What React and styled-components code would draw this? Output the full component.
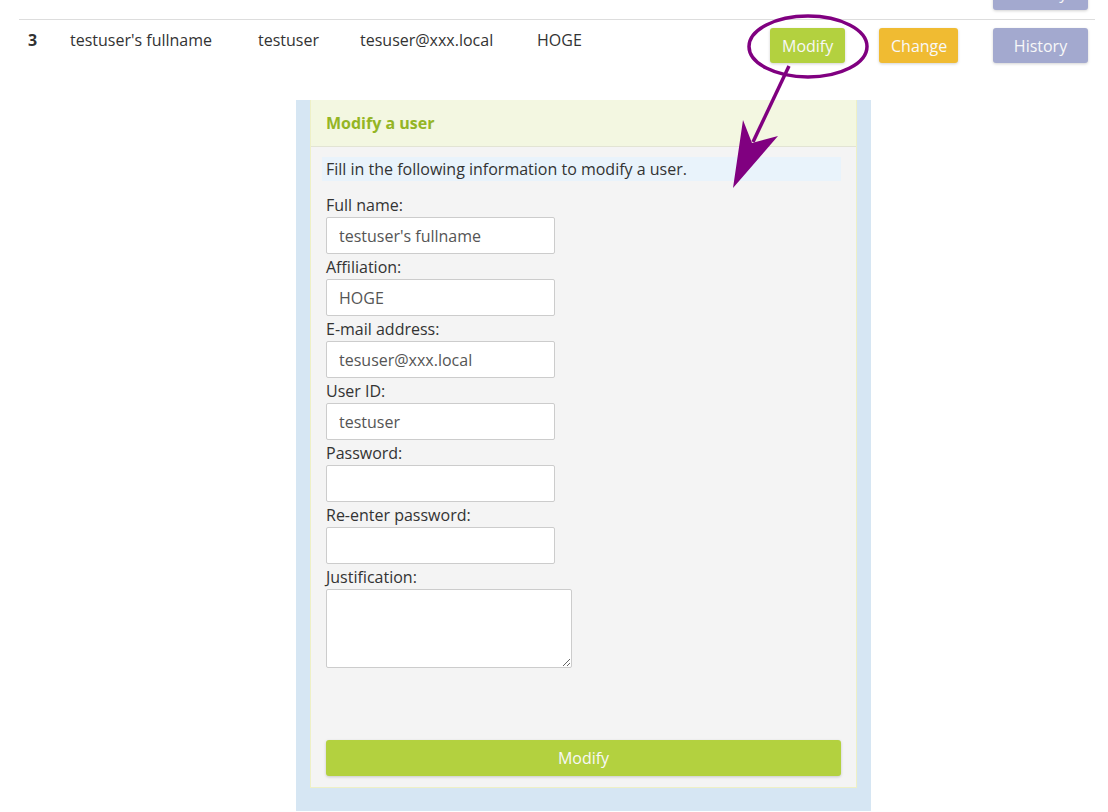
import React from "react";
import styled, { createGlobalStyle } from "styled-components";

const GlobalStyle = createGlobalStyle`
  html, body {
    margin: 0;
    padding: 0;
    background: #fff;
  }
  body {
    font-family: "Open Sans", "Liberation Sans", sans-serif;
    font-size: 16px;
    color: #333;
  }
`;

const Page = styled.div`
  position: relative;
  width: 1108px;
  height: 812px;
  overflow: hidden;
`;

const Table = styled.div`
  margin-left: 19px;
  width: 1076px;
`;

const PrevRow = styled.div`
  height: 20px;
  display: flex;
  justify-content: flex-end;
  align-items: flex-end;
  padding-right: 7px;
  padding-bottom: 9px;
  box-sizing: border-box;
  overflow: hidden;
  border-bottom: 1px solid #dddddd;
`;

const Row = styled.div`
  display: flex;
  align-items: flex-start;
  padding-top: 8px;
  height: 80px;
  box-sizing: border-box;
`;

const Cell = styled.div`
  width: ${({ w }) => w}px;
  padding-left: 9px;
  box-sizing: border-box;
  line-height: 24px;
  font-weight: ${({ bold }) => (bold ? 700 : 400)};
  white-space: nowrap;
`;

const Spacer = styled.div`
  flex: 1;
`;

const colors = {
  green: "#b3d13f",
  orange: "#f0bb32",
  purple: "#a3a9cf",
};

const Button = styled.button`
  height: 35px;
  ${({ w }) => (w ? `width: ${w}px;` : "")}
  padding: 0 12px;
  border: none;
  border-radius: 3px;
  background: ${({ tone }) => colors[tone]};
  color: #f8f8f8;
  font-family: inherit;
  font-size: 16px;
  box-shadow: 0 1px 3px rgba(0, 0, 0, 0.18);
  cursor: pointer;
  flex-shrink: 0;
`;

const Outer = styled.div`
  margin-left: 296px;
  width: 575px;
  background: #d6e6f3;
  padding: 0 14px 23px;
  box-sizing: border-box;
`;

const Card = styled.div`
  background: #f4f4f4;
  border: 1px solid #eef0c6;
  border-top: none;
`;

const Header = styled.div`
  height: 46px;
  background: #f3f7e1;
  border-bottom: 1px solid #e2e4d4;
  display: flex;
  align-items: center;
  padding-left: 15px;
  font-weight: 700;
  color: #94b524;
`;

const Body = styled.div`
  padding: 10px 15px 11px;
  display: flex;
  flex-direction: column;
`;

const Note = styled.div`
  margin-left: -4px;
  padding-left: 4px;
  height: 24px;
  line-height: 24px;
  background: #e9f3fb;
  margin-bottom: 12px;
`;

const Label = styled.label`
  line-height: 24px;
`;

const Input = styled.input`
  width: 229px;
  height: 37px;
  box-sizing: border-box;
  border: 1px solid #cccccc;
  border-radius: 2px;
  background: #fff;
  padding: 0 12px;
  margin: 0 0 1px;
  font-family: inherit;
  font-size: 16px;
  color: #555;
`;

const TextArea = styled.textarea`
  width: 246px;
  height: 79px;
  box-sizing: border-box;
  border: 1px solid #cccccc;
  border-radius: 2px;
  background: #fff;
  margin: 0;
  font-family: inherit;
  font-size: 16px;
`;

const SubmitButton = styled(Button)`
  width: 100%;
  height: 36px;
  margin-top: 72px;
`;

const Annotation = styled.svg`
  position: absolute;
  left: 0;
  top: 0;
  pointer-events: none;
`;

const fields = [
  { label: "Full name:", value: "testuser's fullname" },
  { label: "Affiliation:", value: "HOGE" },
  { label: "E-mail address:", value: "tesuser@xxx.local" },
  { label: "User ID:", value: "testuser" },
  { label: "Password:", value: "", type: "password" },
  { label: "Re-enter password:", value: "", type: "password" },
];

export default function App() {
  return (
    <Page>
      <GlobalStyle />
      <Table>
        <PrevRow>
          <Button tone="purple" w={95}>History</Button>
        </PrevRow>
        <Row>
          <Cell w={42} bold>3</Cell>
          <Cell w={188}>testuser's fullname</Cell>
          <Cell w={102}>testuser</Cell>
          <Cell w={177}>tesuser@xxx.local</Cell>
          <Cell w={100}>HOGE</Cell>
          <Spacer />
          <Cell w={109}>
            <Button tone="green">Modify</Button>
          </Cell>
          <Cell w={114}>
            <Button tone="orange" w={79}>Change</Button>
          </Cell>
          <Cell w={111}>
            <Button tone="purple" w={95}>History</Button>
          </Cell>
        </Row>
      </Table>

      <Outer>
        <Card>
          <Header>Modify a user</Header>
          <Body>
            <Note>Fill in the following information to modify a user.</Note>
            {fields.map((f) => (
              <React.Fragment key={f.label}>
                <Label>{f.label}</Label>
                <Input type={f.type || "text"} defaultValue={f.value} />
              </React.Fragment>
            ))}
            <Label>Justification:</Label>
            <TextArea />
            <SubmitButton tone="green">Modify</SubmitButton>
          </Body>
        </Card>
      </Outer>

      <Annotation width="1108" height="812" viewBox="0 0 1108 812">
        <ellipse
          cx="808"
          cy="46.5"
          rx="59"
          ry="30.5"
          fill="none"
          stroke="#800080"
          strokeWidth="3.5"
        />
        <line
          x1="789"
          y1="66"
          x2="753"
          y2="142"
          stroke="#800080"
          strokeWidth="3.5"
        />
        <polygon points="733,188 743,120 752,143 778,136" fill="#800080" />
      </Annotation>
    </Page>
  );
}
